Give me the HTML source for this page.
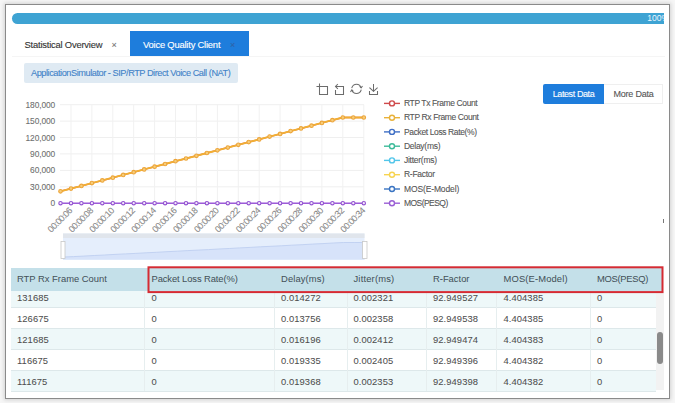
<!DOCTYPE html>
<html><head><meta charset="utf-8"><style>
html,body{margin:0;padding:0;}
body{width:675px;height:403px;position:relative;overflow:hidden;background:#f6f6f6;font-family:"Liberation Sans",sans-serif;}
.abs{position:absolute;}
#frame{position:absolute;left:5px;top:4px;width:663px;height:393px;border:1px solid #8a8a8a;background:#fff;box-shadow:0 0 4px 1px rgba(0,0,0,0.15);}
#prog{position:absolute;left:12px;top:13px;width:652px;height:11px;border-radius:6px 0 0 6px;background:#3ea3d3;color:#eaf6ff;font-size:8.5px;line-height:11px;text-align:right;overflow:hidden;}
#prog span{position:absolute;right:-5px;top:0;}
.tab{position:absolute;top:31px;height:25px;line-height:28.5px;font-size:9.4px;letter-spacing:-0.2px;-webkit-text-stroke:0.12px currentColor;white-space:nowrap;}
#tagbox{position:absolute;left:24px;top:63px;width:214px;height:20px;background:#dfeaf3;border-radius:2px;color:#4282c8;font-size:9.2px;line-height:20px;letter-spacing:-0.45px;-webkit-text-stroke:0.1px currentColor;white-space:nowrap;}
.btn{position:absolute;top:83.5px;height:20px;line-height:20px;font-size:9px;letter-spacing:-0.4px;-webkit-text-stroke:0.1px currentColor;text-align:center;white-space:nowrap;}
svg text{font-family:"Liberation Sans",sans-serif;}
.yl{font-size:8.4px;fill:#6e6e6e;letter-spacing:-0.12px;stroke:#6e6e6e;stroke-width:0.08px;}
.xl{font-size:9px;fill:#878787;letter-spacing:-0.6px;stroke:#878787;stroke-width:0.08px;}
.lg{font-size:8.5px;fill:#555;letter-spacing:-0.28px;stroke:#555;stroke-width:0.1px;}
#thead{position:absolute;left:11px;top:268px;width:651px;height:23px;background:#c4e0e9;}
.hcell{position:absolute;top:5.3px;font-size:9.4px;color:#44525a;letter-spacing:0px;-webkit-text-stroke:0.04px #44525a;white-space:nowrap;}
.row{position:absolute;left:11px;width:645px;border-bottom:1px solid #dde8ea;box-sizing:border-box;}
.cell{position:absolute;font-size:9.4px;color:#4d4d4d;letter-spacing:0.08px;-webkit-text-stroke:0.05px #555;white-space:nowrap;}
.vd{position:absolute;top:291px;height:100px;width:1px;background:#e6eeef;}
#red{position:absolute;left:147.5px;top:266.3px;width:511.5px;height:22.6px;border:1.8px solid #d52b33;}
#track{position:absolute;left:656px;top:291px;width:8px;height:99px;background:#f2f2f2;}
#thumb{position:absolute;left:657px;top:332px;width:5.5px;height:32px;background:#8a8a8a;border-radius:3px;}
</style></head><body>
<div id="frame"></div>
<div id="prog"><span>100%</span></div>
<div class="abs" style="left:12px;top:56px;width:653px;height:1px;background:#f5f5f5"></div>
<div class="tab" style="left:12px;width:118px;background:#fff;color:#333;"><span style="position:absolute;left:12.5px">Statistical Overview</span><span style="position:absolute;left:99.5px;color:#777;font-size:9px">×</span></div>
<div class="tab" style="left:130px;width:118.5px;background:#1e7ddc;color:#fff;"><span style="position:absolute;left:13px">Voice Quality Client</span><span style="position:absolute;left:100px;color:#2f64a8;font-size:9px">×</span></div>
<div id="tagbox"><span style="position:absolute;left:7px">ApplicationSimulator - SIP/RTP Direct Voice Call (NAT)</span></div>
<div class="btn" style="left:543px;width:61px;background:#1e7ddc;color:#fff;border-radius:2px 0 0 2px;">Latest Data</div>
<div class="btn" style="left:604px;width:59px;background:#fff;color:#555;border:1px solid #efefef;border-left:none;box-sizing:border-box;line-height:18px;letter-spacing:-0.2px;padding-left:1px;">More Data</div>
<div class="abs" style="left:662.5px;top:219px;width:1px;height:4px;background:#777"></div>
<svg class="abs" style="left:0;top:0" width="675" height="403" viewBox="0 0 675 403">
<line x1="60" y1="104.7" x2="364" y2="104.7" stroke="#efefef" stroke-width="1"/>
<line x1="60" y1="121.1" x2="364" y2="121.1" stroke="#efefef" stroke-width="1"/>
<line x1="60" y1="137.5" x2="364" y2="137.5" stroke="#efefef" stroke-width="1"/>
<line x1="60" y1="153.9" x2="364" y2="153.9" stroke="#efefef" stroke-width="1"/>
<line x1="60" y1="170.4" x2="364" y2="170.4" stroke="#efefef" stroke-width="1"/>
<line x1="60" y1="186.8" x2="364" y2="186.8" stroke="#efefef" stroke-width="1"/>
<line x1="60" y1="203.2" x2="364" y2="203.2" stroke="#efefef" stroke-width="1"/>
<line x1="71.0" y1="104.7" x2="71.0" y2="203.2" stroke="#f1f1f1" stroke-width="1"/>
<line x1="91.9" y1="104.7" x2="91.9" y2="203.2" stroke="#f1f1f1" stroke-width="1"/>
<line x1="112.8" y1="104.7" x2="112.8" y2="203.2" stroke="#f1f1f1" stroke-width="1"/>
<line x1="133.7" y1="104.7" x2="133.7" y2="203.2" stroke="#f1f1f1" stroke-width="1"/>
<line x1="154.6" y1="104.7" x2="154.6" y2="203.2" stroke="#f1f1f1" stroke-width="1"/>
<line x1="175.5" y1="104.7" x2="175.5" y2="203.2" stroke="#f1f1f1" stroke-width="1"/>
<line x1="196.4" y1="104.7" x2="196.4" y2="203.2" stroke="#f1f1f1" stroke-width="1"/>
<line x1="217.4" y1="104.7" x2="217.4" y2="203.2" stroke="#f1f1f1" stroke-width="1"/>
<line x1="238.3" y1="104.7" x2="238.3" y2="203.2" stroke="#f1f1f1" stroke-width="1"/>
<line x1="259.2" y1="104.7" x2="259.2" y2="203.2" stroke="#f1f1f1" stroke-width="1"/>
<line x1="280.1" y1="104.7" x2="280.1" y2="203.2" stroke="#f1f1f1" stroke-width="1"/>
<line x1="301.0" y1="104.7" x2="301.0" y2="203.2" stroke="#f1f1f1" stroke-width="1"/>
<line x1="321.9" y1="104.7" x2="321.9" y2="203.2" stroke="#f1f1f1" stroke-width="1"/>
<line x1="342.8" y1="104.7" x2="342.8" y2="203.2" stroke="#f1f1f1" stroke-width="1"/>
<line x1="363.8" y1="104.7" x2="363.8" y2="203.2" stroke="#f1f1f1" stroke-width="1"/>
<text x="55" y="107.7" text-anchor="end" class="yl">180,000</text>
<text x="55" y="124.1" text-anchor="end" class="yl">150,000</text>
<text x="55" y="140.5" text-anchor="end" class="yl">120,000</text>
<text x="55" y="156.9" text-anchor="end" class="yl">90,000</text>
<text x="55" y="173.4" text-anchor="end" class="yl">60,000</text>
<text x="55" y="189.8" text-anchor="end" class="yl">30,000</text>
<text x="55" y="206.2" text-anchor="end" class="yl">0</text>
<text transform="translate(72.7,211.5) rotate(-45)" text-anchor="end" class="xl">00:00:06</text>
<text transform="translate(93.6,211.5) rotate(-45)" text-anchor="end" class="xl">00:00:08</text>
<text transform="translate(114.5,211.5) rotate(-45)" text-anchor="end" class="xl">00:00:10</text>
<text transform="translate(135.4,211.5) rotate(-45)" text-anchor="end" class="xl">00:00:12</text>
<text transform="translate(156.3,211.5) rotate(-45)" text-anchor="end" class="xl">00:00:14</text>
<text transform="translate(177.2,211.5) rotate(-45)" text-anchor="end" class="xl">00:00:16</text>
<text transform="translate(198.1,211.5) rotate(-45)" text-anchor="end" class="xl">00:00:18</text>
<text transform="translate(219.1,211.5) rotate(-45)" text-anchor="end" class="xl">00:00:20</text>
<text transform="translate(240.0,211.5) rotate(-45)" text-anchor="end" class="xl">00:00:22</text>
<text transform="translate(260.9,211.5) rotate(-45)" text-anchor="end" class="xl">00:00:24</text>
<text transform="translate(281.8,211.5) rotate(-45)" text-anchor="end" class="xl">00:00:26</text>
<text transform="translate(302.7,211.5) rotate(-45)" text-anchor="end" class="xl">00:00:28</text>
<text transform="translate(323.6,211.5) rotate(-45)" text-anchor="end" class="xl">00:00:30</text>
<text transform="translate(344.5,211.5) rotate(-45)" text-anchor="end" class="xl">00:00:32</text>
<text transform="translate(365.5,211.5) rotate(-45)" text-anchor="end" class="xl">00:00:34</text>
<polyline points="60.5,191.3 71.0,188.6 81.4,185.9 91.9,183.1 102.3,180.4 112.8,177.7 123.2,174.9 133.7,172.2 144.2,169.4 154.6,166.7 165.1,164.0 175.5,161.2 186.0,158.5 196.4,155.8 206.9,153.0 217.4,150.3 227.8,147.6 238.3,144.8 248.7,142.1 259.2,139.4 269.6,136.6 280.1,133.9 290.6,131.1 301.0,128.4 311.5,125.7 321.9,122.9 332.4,120.2 342.8,117.5 353.3,117.5 363.8,117.5" fill="none" stroke="#e05a4e" stroke-width="1.5"/>
<polyline points="60.5,191.3 71.0,188.6 81.4,185.9 91.9,183.1 102.3,180.4 112.8,177.7 123.2,174.9 133.7,172.2 144.2,169.4 154.6,166.7 165.1,164.0 175.5,161.2 186.0,158.5 196.4,155.8 206.9,153.0 217.4,150.3 227.8,147.6 238.3,144.8 248.7,142.1 259.2,139.4 269.6,136.6 280.1,133.9 290.6,131.1 301.0,128.4 311.5,125.7 321.9,122.9 332.4,120.2 342.8,117.5 353.3,117.5 363.8,117.5" fill="none" stroke="#f1b032" stroke-width="1.9"/>
<circle cx="60.5" cy="191.3" r="1.8" fill="#f6cd7a" stroke="#eda53a" stroke-width="1.1"/>
<circle cx="71.0" cy="188.6" r="1.8" fill="#f6cd7a" stroke="#eda53a" stroke-width="1.1"/>
<circle cx="81.4" cy="185.9" r="1.8" fill="#f6cd7a" stroke="#eda53a" stroke-width="1.1"/>
<circle cx="91.9" cy="183.1" r="1.8" fill="#f6cd7a" stroke="#eda53a" stroke-width="1.1"/>
<circle cx="102.3" cy="180.4" r="1.8" fill="#f6cd7a" stroke="#eda53a" stroke-width="1.1"/>
<circle cx="112.8" cy="177.7" r="1.8" fill="#f6cd7a" stroke="#eda53a" stroke-width="1.1"/>
<circle cx="123.2" cy="174.9" r="1.8" fill="#f6cd7a" stroke="#eda53a" stroke-width="1.1"/>
<circle cx="133.7" cy="172.2" r="1.8" fill="#f6cd7a" stroke="#eda53a" stroke-width="1.1"/>
<circle cx="144.2" cy="169.4" r="1.8" fill="#f6cd7a" stroke="#eda53a" stroke-width="1.1"/>
<circle cx="154.6" cy="166.7" r="1.8" fill="#f6cd7a" stroke="#eda53a" stroke-width="1.1"/>
<circle cx="165.1" cy="164.0" r="1.8" fill="#f6cd7a" stroke="#eda53a" stroke-width="1.1"/>
<circle cx="175.5" cy="161.2" r="1.8" fill="#f6cd7a" stroke="#eda53a" stroke-width="1.1"/>
<circle cx="186.0" cy="158.5" r="1.8" fill="#f6cd7a" stroke="#eda53a" stroke-width="1.1"/>
<circle cx="196.4" cy="155.8" r="1.8" fill="#f6cd7a" stroke="#eda53a" stroke-width="1.1"/>
<circle cx="206.9" cy="153.0" r="1.8" fill="#f6cd7a" stroke="#eda53a" stroke-width="1.1"/>
<circle cx="217.4" cy="150.3" r="1.8" fill="#f6cd7a" stroke="#eda53a" stroke-width="1.1"/>
<circle cx="227.8" cy="147.6" r="1.8" fill="#f6cd7a" stroke="#eda53a" stroke-width="1.1"/>
<circle cx="238.3" cy="144.8" r="1.8" fill="#f6cd7a" stroke="#eda53a" stroke-width="1.1"/>
<circle cx="248.7" cy="142.1" r="1.8" fill="#f6cd7a" stroke="#eda53a" stroke-width="1.1"/>
<circle cx="259.2" cy="139.4" r="1.8" fill="#f6cd7a" stroke="#eda53a" stroke-width="1.1"/>
<circle cx="269.6" cy="136.6" r="1.8" fill="#f6cd7a" stroke="#eda53a" stroke-width="1.1"/>
<circle cx="280.1" cy="133.9" r="1.8" fill="#f6cd7a" stroke="#eda53a" stroke-width="1.1"/>
<circle cx="290.6" cy="131.1" r="1.8" fill="#f6cd7a" stroke="#eda53a" stroke-width="1.1"/>
<circle cx="301.0" cy="128.4" r="1.8" fill="#f6cd7a" stroke="#eda53a" stroke-width="1.1"/>
<circle cx="311.5" cy="125.7" r="1.8" fill="#f6cd7a" stroke="#eda53a" stroke-width="1.1"/>
<circle cx="321.9" cy="122.9" r="1.8" fill="#f6cd7a" stroke="#eda53a" stroke-width="1.1"/>
<circle cx="332.4" cy="120.2" r="1.8" fill="#f6cd7a" stroke="#eda53a" stroke-width="1.1"/>
<circle cx="342.8" cy="117.5" r="1.8" fill="#f6cd7a" stroke="#eda53a" stroke-width="1.1"/>
<circle cx="353.3" cy="117.5" r="1.8" fill="#f6cd7a" stroke="#eda53a" stroke-width="1.1"/>
<circle cx="363.8" cy="117.5" r="1.8" fill="#f6cd7a" stroke="#eda53a" stroke-width="1.1"/>
<line x1="60.5" y1="203.2" x2="363.8" y2="203.2" stroke="#9d5bd9" stroke-width="1.5"/>
<circle cx="60.5" cy="203.2" r="1.7" fill="#f3e8fb" stroke="#9252d0" stroke-width="1.1"/>
<circle cx="71.0" cy="203.2" r="1.7" fill="#f3e8fb" stroke="#9252d0" stroke-width="1.1"/>
<circle cx="81.4" cy="203.2" r="1.7" fill="#f3e8fb" stroke="#9252d0" stroke-width="1.1"/>
<circle cx="91.9" cy="203.2" r="1.7" fill="#f3e8fb" stroke="#9252d0" stroke-width="1.1"/>
<circle cx="102.3" cy="203.2" r="1.7" fill="#f3e8fb" stroke="#9252d0" stroke-width="1.1"/>
<circle cx="112.8" cy="203.2" r="1.7" fill="#f3e8fb" stroke="#9252d0" stroke-width="1.1"/>
<circle cx="123.2" cy="203.2" r="1.7" fill="#f3e8fb" stroke="#9252d0" stroke-width="1.1"/>
<circle cx="133.7" cy="203.2" r="1.7" fill="#f3e8fb" stroke="#9252d0" stroke-width="1.1"/>
<circle cx="144.2" cy="203.2" r="1.7" fill="#f3e8fb" stroke="#9252d0" stroke-width="1.1"/>
<circle cx="154.6" cy="203.2" r="1.7" fill="#f3e8fb" stroke="#9252d0" stroke-width="1.1"/>
<circle cx="165.1" cy="203.2" r="1.7" fill="#f3e8fb" stroke="#9252d0" stroke-width="1.1"/>
<circle cx="175.5" cy="203.2" r="1.7" fill="#f3e8fb" stroke="#9252d0" stroke-width="1.1"/>
<circle cx="186.0" cy="203.2" r="1.7" fill="#f3e8fb" stroke="#9252d0" stroke-width="1.1"/>
<circle cx="196.4" cy="203.2" r="1.7" fill="#f3e8fb" stroke="#9252d0" stroke-width="1.1"/>
<circle cx="206.9" cy="203.2" r="1.7" fill="#f3e8fb" stroke="#9252d0" stroke-width="1.1"/>
<circle cx="217.4" cy="203.2" r="1.7" fill="#f3e8fb" stroke="#9252d0" stroke-width="1.1"/>
<circle cx="227.8" cy="203.2" r="1.7" fill="#f3e8fb" stroke="#9252d0" stroke-width="1.1"/>
<circle cx="238.3" cy="203.2" r="1.7" fill="#f3e8fb" stroke="#9252d0" stroke-width="1.1"/>
<circle cx="248.7" cy="203.2" r="1.7" fill="#f3e8fb" stroke="#9252d0" stroke-width="1.1"/>
<circle cx="259.2" cy="203.2" r="1.7" fill="#f3e8fb" stroke="#9252d0" stroke-width="1.1"/>
<circle cx="269.6" cy="203.2" r="1.7" fill="#f3e8fb" stroke="#9252d0" stroke-width="1.1"/>
<circle cx="280.1" cy="203.2" r="1.7" fill="#f3e8fb" stroke="#9252d0" stroke-width="1.1"/>
<circle cx="290.6" cy="203.2" r="1.7" fill="#f3e8fb" stroke="#9252d0" stroke-width="1.1"/>
<circle cx="301.0" cy="203.2" r="1.7" fill="#f3e8fb" stroke="#9252d0" stroke-width="1.1"/>
<circle cx="311.5" cy="203.2" r="1.7" fill="#f3e8fb" stroke="#9252d0" stroke-width="1.1"/>
<circle cx="321.9" cy="203.2" r="1.7" fill="#f3e8fb" stroke="#9252d0" stroke-width="1.1"/>
<circle cx="332.4" cy="203.2" r="1.7" fill="#f3e8fb" stroke="#9252d0" stroke-width="1.1"/>
<circle cx="342.8" cy="203.2" r="1.7" fill="#f3e8fb" stroke="#9252d0" stroke-width="1.1"/>
<circle cx="353.3" cy="203.2" r="1.7" fill="#f3e8fb" stroke="#9252d0" stroke-width="1.1"/>
<circle cx="363.8" cy="203.2" r="1.7" fill="#f3e8fb" stroke="#9252d0" stroke-width="1.1"/>
<line x1="384" y1="103.4" x2="400" y2="103.4" stroke="#cf4a4c" stroke-width="1.4"/>
<circle cx="392" cy="103.4" r="2.5" fill="#fff" stroke="#cf4a4c" stroke-width="1.4"/>
<text x="404" y="106.1" class="lg" style="letter-spacing:-0.39px">RTP Tx Frame Count</text>
<line x1="384" y1="117.7" x2="400" y2="117.7" stroke="#e9b23a" stroke-width="1.4"/>
<circle cx="392" cy="117.7" r="2.5" fill="#fff" stroke="#e9b23a" stroke-width="1.4"/>
<text x="404" y="120.4" class="lg" style="letter-spacing:-0.38px">RTP Rx Frame Count</text>
<line x1="384" y1="131.9" x2="400" y2="131.9" stroke="#3f6fc5" stroke-width="1.4"/>
<circle cx="392" cy="131.9" r="2.5" fill="#fff" stroke="#3f6fc5" stroke-width="1.4"/>
<text x="404" y="134.6" class="lg" style="letter-spacing:-0.38px">Packet Loss Rate(%)</text>
<line x1="384" y1="146.2" x2="400" y2="146.2" stroke="#3dbb9a" stroke-width="1.4"/>
<circle cx="392" cy="146.2" r="2.5" fill="#fff" stroke="#3dbb9a" stroke-width="1.4"/>
<text x="404" y="148.9" class="lg" style="letter-spacing:-0.28px">Delay(ms)</text>
<line x1="384" y1="160.4" x2="400" y2="160.4" stroke="#52c6ea" stroke-width="1.4"/>
<circle cx="392" cy="160.4" r="2.5" fill="#fff" stroke="#52c6ea" stroke-width="1.4"/>
<text x="404" y="163.1" class="lg" style="letter-spacing:-0.26px">Jitter(ms)</text>
<line x1="384" y1="174.7" x2="400" y2="174.7" stroke="#f7d451" stroke-width="1.4"/>
<circle cx="392" cy="174.7" r="2.5" fill="#fff" stroke="#f7d451" stroke-width="1.4"/>
<text x="404" y="177.4" class="lg" style="letter-spacing:-0.28px">R-Factor</text>
<line x1="384" y1="189.0" x2="400" y2="189.0" stroke="#3a74c2" stroke-width="1.4"/>
<circle cx="392" cy="189.0" r="2.5" fill="#fff" stroke="#3a74c2" stroke-width="1.4"/>
<text x="404" y="191.7" class="lg" style="letter-spacing:-0.13px">MOS(E-Model)</text>
<line x1="384" y1="203.2" x2="400" y2="203.2" stroke="#9b5fd5" stroke-width="1.4"/>
<circle cx="392" cy="203.2" r="2.5" fill="#fff" stroke="#9b5fd5" stroke-width="1.4"/>
<text x="404" y="205.9" class="lg" style="letter-spacing:-0.55px">MOS(PESQ)</text>
<g fill="none" stroke="#6c6c6c" stroke-width="1.05" stroke-linecap="square"><path d="M317,86.5 H327.5 V94.5 H319.5 V84"/><path d="M335.5,90.5 V94.5 H343.5 V86.5 H336"/><path d="M337.5,84.5 L335.5,86.5 L337.5,88.5"/><path d="M351.9,87.6 A4.8,4.8 0 0 1 361.1,87.6"/><path d="M361.1,90.1 A4.8,4.8 0 0 1 351.9,90.1"/><path d="M360,86.8 L361.2,87.8 L362.2,86.4"/><path d="M353,91 L351.8,90 L350.8,91.4"/><path d="M373.5,84.5 V91"/><path d="M369.8,88 L373.5,91.3 L377.2,88"/><path d="M369.5,91.5 V94.5 H377.5 V91.5"/></g>
<rect x="63" y="233.5" width="301.5" height="26.5" fill="#e5eefc"/>
<rect x="63" y="233.5" width="301.5" height="4.5" fill="#e0e5ec"/>
<path d="M63,259.5 L63.0,257.1 L73.4,256.6 L83.8,256.1 L94.2,255.5 L104.6,255.0 L115.0,254.4 L125.4,253.9 L135.8,253.4 L146.2,252.8 L156.6,252.3 L167.0,251.7 L177.4,251.2 L187.8,250.6 L198.2,250.1 L208.6,249.6 L218.9,249.0 L229.3,248.5 L239.7,247.9 L250.1,247.4 L260.5,246.8 L270.9,246.3 L281.3,245.8 L291.7,245.2 L302.1,244.7 L312.5,244.1 L322.9,243.6 L333.3,243.0 L343.7,242.5 L354.1,242.5 L364.5,242.5 L364.5,259.5 Z" fill="#d7e3fa"/>
<path d="M63.0,257.1 L63.0,257.1 L73.4,256.6 L83.8,256.1 L94.2,255.5 L104.6,255.0 L115.0,254.4 L125.4,253.9 L135.8,253.4 L146.2,252.8 L156.6,252.3 L167.0,251.7 L177.4,251.2 L187.8,250.6 L198.2,250.1 L208.6,249.6 L218.9,249.0 L229.3,248.5 L239.7,247.9 L250.1,247.4 L260.5,246.8 L270.9,246.3 L281.3,245.8 L291.7,245.2 L302.1,244.7 L312.5,244.1 L322.9,243.6 L333.3,243.0 L343.7,242.5 L354.1,242.5 L364.5,242.5" stroke="#c2d2f2" stroke-width="1" fill="none"/>
<rect x="61" y="241.5" width="4" height="17" fill="#fff" stroke="#c8c8c8" stroke-width="0.8"/>
<rect x="362.5" y="241.5" width="4.5" height="17" fill="#fff" stroke="#c8c8c8" stroke-width="0.8"/>
</svg>
<div class="row" style="top:287px;height:20.5px;background:#eef8f9"></div>
<div class="cell" style="left:17px;top:291.8px">131685</div>
<div class="cell" style="left:151.5px;top:291.8px">0</div>
<div class="cell" style="left:281px;top:291.8px">0.014272</div>
<div class="cell" style="left:353.5px;top:291.8px">0.002321</div>
<div class="cell" style="left:433px;top:291.8px">92.949527</div>
<div class="cell" style="left:503.5px;top:291.8px">4.404385</div>
<div class="cell" style="left:597px;top:291.8px">0</div>
<div class="row" style="top:307.5px;height:21.0px;background:#ffffff"></div>
<div class="cell" style="left:17px;top:312.5px">126675</div>
<div class="cell" style="left:151.5px;top:312.5px">0</div>
<div class="cell" style="left:281px;top:312.5px">0.013756</div>
<div class="cell" style="left:353.5px;top:312.5px">0.002358</div>
<div class="cell" style="left:433px;top:312.5px">92.949538</div>
<div class="cell" style="left:503.5px;top:312.5px">4.404385</div>
<div class="cell" style="left:597px;top:312.5px">0</div>
<div class="row" style="top:328.5px;height:21.0px;background:#eef8f9"></div>
<div class="cell" style="left:17px;top:333.5px">121685</div>
<div class="cell" style="left:151.5px;top:333.5px">0</div>
<div class="cell" style="left:281px;top:333.5px">0.016196</div>
<div class="cell" style="left:353.5px;top:333.5px">0.002412</div>
<div class="cell" style="left:433px;top:333.5px">92.949474</div>
<div class="cell" style="left:503.5px;top:333.5px">4.404383</div>
<div class="cell" style="left:597px;top:333.5px">0</div>
<div class="row" style="top:349.5px;height:21.0px;background:#ffffff"></div>
<div class="cell" style="left:17px;top:354.5px">116675</div>
<div class="cell" style="left:151.5px;top:354.5px">0</div>
<div class="cell" style="left:281px;top:354.5px">0.019335</div>
<div class="cell" style="left:353.5px;top:354.5px">0.002405</div>
<div class="cell" style="left:433px;top:354.5px">92.949396</div>
<div class="cell" style="left:503.5px;top:354.5px">4.404382</div>
<div class="cell" style="left:597px;top:354.5px">0</div>
<div class="row" style="top:370.5px;height:21.0px;background:#eef8f9"></div>
<div class="cell" style="left:17px;top:375.5px">111675</div>
<div class="cell" style="left:151.5px;top:375.5px">0</div>
<div class="cell" style="left:281px;top:375.5px">0.019368</div>
<div class="cell" style="left:353.5px;top:375.5px">0.002353</div>
<div class="cell" style="left:433px;top:375.5px">92.949398</div>
<div class="cell" style="left:503.5px;top:375.5px">4.404382</div>
<div class="cell" style="left:597px;top:375.5px">0</div>
<div class="vd" style="left:144px"></div>
<div class="vd" style="left:274px"></div>
<div class="vd" style="left:347px"></div>
<div class="vd" style="left:426px"></div>
<div class="vd" style="left:496px"></div>
<div class="vd" style="left:590px"></div>
<div id="thead"><div class="hcell" style="left:6px;letter-spacing:0.0px">RTP Rx Frame Count</div>
<div class="hcell" style="left:140.5px;letter-spacing:-0.1px">Packet Loss Rate(%)</div>
<div class="hcell" style="left:270px;letter-spacing:0.12px">Delay(ms)</div>
<div class="hcell" style="left:342.5px;letter-spacing:0.18px">Jitter(ms)</div>
<div class="hcell" style="left:422px;letter-spacing:0.0px">R-Factor</div>
<div class="hcell" style="left:492.5px;letter-spacing:0.14px">MOS(E-Model)</div>
<div class="hcell" style="left:586px;letter-spacing:-0.3px">MOS(PESQ)</div></div>
<div id="track"></div><div id="thumb"></div>
<svg class="abs" style="left:0;top:0" width="675" height="403"><rect x="148.5" y="267.3" width="514" height="24.8" fill="none" stroke="#d52b33" stroke-width="2"/></svg>
</body></html>
